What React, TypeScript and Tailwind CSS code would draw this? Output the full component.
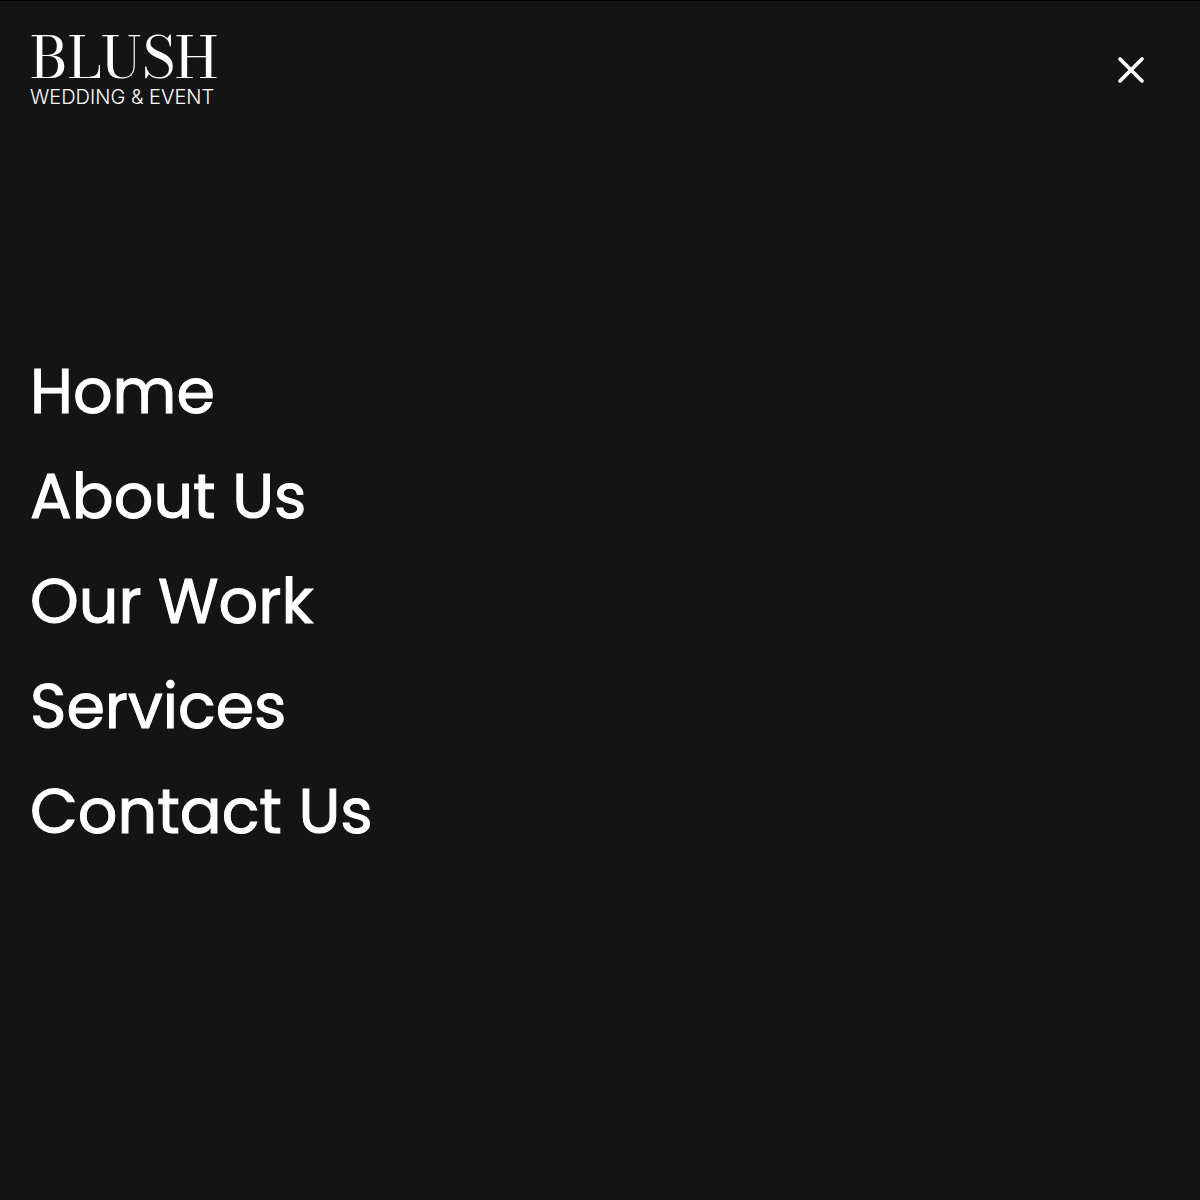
import React, { useState } from 'react'
import { X } from 'lucide-react'

const links = [
  { label: 'Home', href: '#home' },
  { label: 'About Us', href: '#about' },
  { label: 'Our Work', href: '#work' },
  { label: 'Services', href: '#services' },
  { label: 'Contact Us', href: '#contact' }
]

function Logo() {
  return (
    <a href="#home" className="flex flex-col items-start text-white">
      <span className="font-['Bodoni_Moda','Playfair_Display','Liberation_Serif',serif] text-[57px] leading-[54px]">
        BLUSH
      </span>
      <span className="font-['Inter',sans-serif] font-light text-xl leading-6">
        WEDDING &amp; EVENT
      </span>
    </a>
  )
}

function App() {
  const [open, setOpen] = useState(true)

  return (
    <div className="flex flex-col min-h-screen bg-[#141414] border-t border-black text-white">
      <header className="flex items-center justify-between pl-[30px] pr-[47px] pt-[30px]">
        <Logo />
        <button
          type="button"
          aria-label="Close menu"
          aria-expanded={open}
          onClick={() => setOpen(!open)}
          className="cursor-pointer"
        >
          <X className="w-11 h-11" strokeWidth={2} />
        </button>
      </header>

      {open && (
        <nav className="flex-1 flex flex-col justify-center pl-[30px] pb-[106px]">
          <ul className="flex flex-col gap-6 font-['Poppins','Inter',sans-serif] text-[62px] leading-[81px] [-webkit-text-stroke:1px_white]">
            {links.map((link) => (
              <li key={link.label}>
                <a href={link.href}>{link.label}</a>
              </li>
            ))}
          </ul>
        </nav>
      )}
    </div>
  )
}

export default App
